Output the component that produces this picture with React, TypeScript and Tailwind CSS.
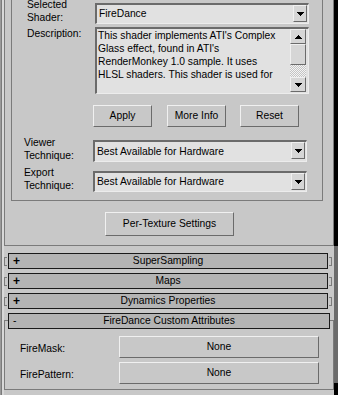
import React from 'react';

const font = "font-['Liberation_Sans',Arial,sans-serif] text-[10.3px] text-black";
const raised = 'border border-t-[#f0f0f0] border-l-[#f0f0f0] border-r-[#6b6b6b] border-b-[#6b6b6b]';
const sunken = 'border-t-2 border-l-2 border-r border-b border-t-[#6b6b6b] border-l-[#6b6b6b] border-r-[#ececec] border-b-[#ececec]';

function Arrow({ up }: { up?: boolean }) {
    return (
        <svg width="7" height="4" viewBox="0 0 7 4" shapeRendering="crispEdges" className={up ? 'rotate-180' : ''}>
            <path d="M0 0h7v1h-1v1h-1v1h-1v1h-1v-1h-1v-1h-1v-1h-1z" fill="#000" />
        </svg>
    );
}

function Dropdown({ value, h, w }: { value: string; h: string; w: string }) {
    return (
        <div className={`flex ${h} ${w} ${sunken} bg-[#e1e1e1]`}>
            <div className="flex flex-1 items-center pl-[2px] whitespace-nowrap">{value}</div>
            <div className={`mr-px flex h-[17px] w-[14px] items-center justify-center bg-[#d6d6d6] ${raised}`}>
                <Arrow />
            </div>
        </div>
    );
}

function Button({ label, className }: { label: string; className: string }) {
    return (
        <div className={`flex items-center justify-center bg-[#c8c8c8] ${raised} ${className}`}>{label}</div>
    );
}

function Header({ label }: { label: string }) {
    return (
        <div className="flex h-[16px] items-start">
            <div className="mt-[4px] h-[9px] w-[3px] border-l border-t border-b border-[#7b7b7b]" />
            <div className="ml-px grid h-[16px] w-[320px] grid-cols-[20px_1fr_20px] items-center border border-[#1a1a1a] bg-[#b4b4b4]">
                <span className="pl-[4px] text-[12px] font-bold leading-none">+</span>
                <span className="text-center leading-none">{label}</span>
                <span />
            </div>
            <div className="ml-px mt-[4px] h-[9px] w-[3px] border-r border-t border-b border-[#7b7b7b]" />
        </div>
    );
}

export default function App() {
    const desc = [
        "This shader implements ATI's Complex",
        "Glass effect, found in ATI's",
        'RenderMonkey 1.0 sample. It uses',
        'HLSL shaders. This shader is used for',
    ];

    return (
        <div className={`flex h-[395px] w-[338px] overflow-hidden bg-[#c8c8c8] ${font}`}>
            <div className="w-px bg-[#9a9a9a]" />
            <div className="w-px bg-[#7b7b7b]" />
            <div className="w-[2px] bg-[#d8d8d8]" />

            <div className="flex w-[330px] flex-col">
                {/* shader rollout */}
                <div className="h-[246px] border-l border-r border-b border-[#7b7b7b] pl-[6px]">
                    <div className="flex h-[201px] w-[312px] flex-col border-l border-r border-b border-[#7b7b7b]">
                        <div className="-mt-[2px] flex">
                            <div className="w-[83px] pl-[15px] leading-[13px]">Selected<br />Shader:</div>
                            <div className="mt-[5px]">
                                <Dropdown value="FireDance" h="h-[21px]" w="w-[214px]" />
                            </div>
                        </div>

                        <div className="mt-[3px] flex">
                            <div className="w-[83px] pl-[15px] leading-[13px]">Description:</div>
                            <div className={`flex h-[67px] w-[214px] ${sunken} bg-[#e1e1e1]`}>
                                <div className="flex-1 overflow-hidden whitespace-nowrap pl-px leading-[13px]">
                                    {desc.map(l => <div key={l}>{l}</div>)}
                                </div>
                                <div className="mr-[2px] flex w-[16px] flex-col pb-px">
                                    <div className={`flex h-[15px] items-center justify-center bg-[#d6d6d6] ${raised}`}><Arrow up /></div>
                                    <div className={`h-[21px] bg-[#d6d6d6] ${raised}`} />
                                    <div className="flex-1 bg-[repeating-conic-gradient(#f4f4f4_0%_25%,#c4c4c4_0%_50%)] bg-[length:2px_2px]" />
                                    <div className={`flex h-[15px] items-center justify-center bg-[#d6d6d6] ${raised}`}><Arrow /></div>
                                </div>
                            </div>
                        </div>

                        <div className="mt-[11px] flex h-[22px] pl-[81px]">
                            <Button label="Apply" className="h-[22px] w-[59px]" />
                            <Button label="More Info" className="ml-[15px] h-[22px] w-[59px]" />
                            <Button label="Reset" className="ml-[14px] h-[22px] w-[59px]" />
                        </div>

                        <div className="mt-[9px] flex">
                            <div className="w-[81px] pl-[12px] leading-[13px]">Viewer<br />Technique:</div>
                            <div className="mt-[4px]">
                                <Dropdown value="Best Available for Hardware" h="h-[22px]" w="w-[214px]" />
                            </div>
                        </div>

                        <div className="mt-[4px] flex">
                            <div className="w-[81px] pl-[12px] leading-[13px]">Export<br />Technique:</div>
                            <div className="mt-[5px]">
                                <Dropdown value="Best Available for Hardware" h="h-[21px]" w="w-[214px]" />
                            </div>
                        </div>
                    </div>

                    <Button label="Per-Texture Settings" className="ml-[94px] mt-[11px] h-[24px] w-[129px]" />
                </div>

                {/* collapsed rollouts */}
                <div className="mt-[7px] flex flex-col gap-[4px]">
                    <Header label="SuperSampling" />
                    <Header label="Maps" />
                    <Header label="Dynamics Properties" />
                </div>

                {/* expanded rollout */}
                <div className="mt-[11px] h-[70px] border border-[#7b7b7b]">
                    <div className="-mt-[8px] ml-[3px] grid h-[16px] w-[322px] grid-cols-[20px_1fr_20px] items-center border border-[#1a1a1a] bg-[#b4b4b4]">
                        <span className="pl-[4px] leading-none">-</span>
                        <span className="text-center leading-none">FireDance Custom Attributes</span>
                        <span />
                    </div>
                    <div className="mt-[7px] flex h-[22px]">
                        <div className="mt-[6px] w-[114px] pl-[15px] leading-[13px]">FireMask:</div>
                        <Button label="None" className="h-[22px] w-[200px]" />
                    </div>
                    <div className="mt-[4px] flex h-[22px]">
                        <div className="mt-[6px] w-[114px] pl-[15px] leading-[13px]">FirePattern:</div>
                        <Button label="None" className="h-[22px] w-[200px]" />
                    </div>
                </div>
            </div>

            <div className="flex w-[4px] flex-col">
                <div className="h-[246px] bg-black" />
                <div className="h-[137px] bg-[#6b6b6b]" />
                <div className="flex-1 bg-black" />
            </div>
        </div>
    );
}
